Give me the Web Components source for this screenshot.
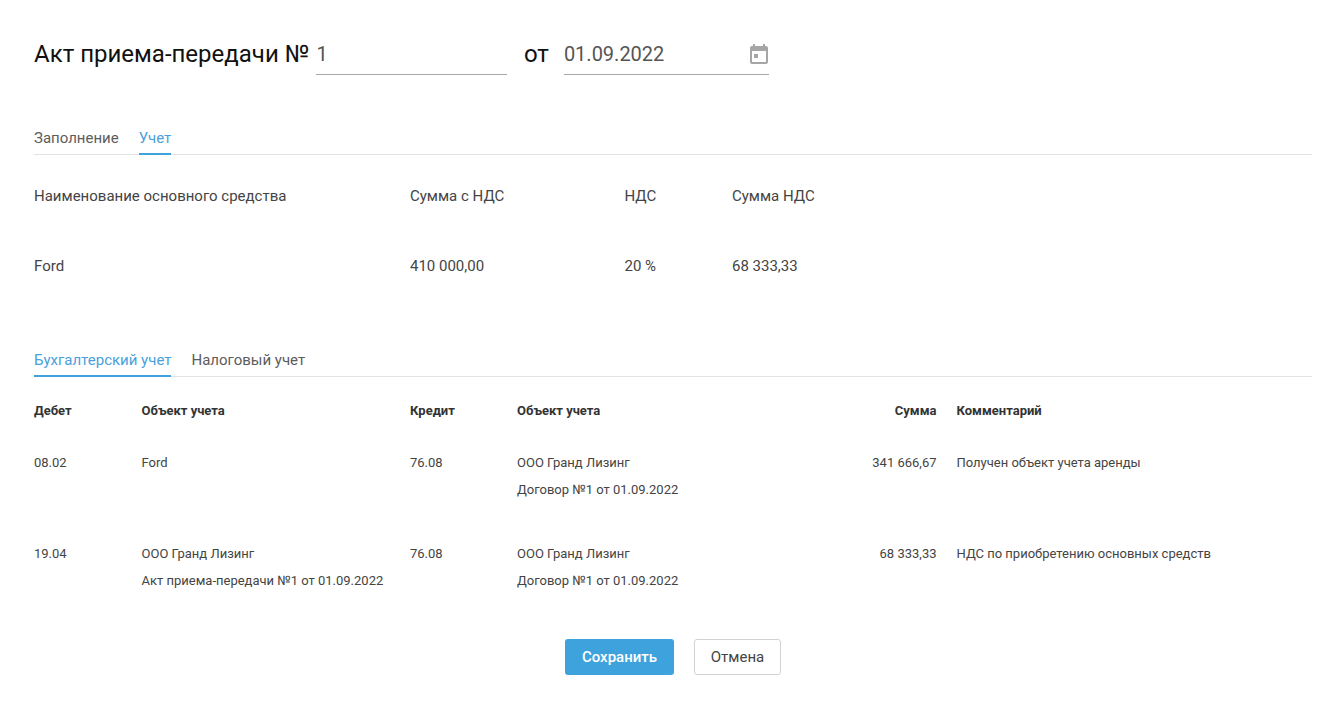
<!DOCTYPE html>
<html lang="ru">
<head>
<meta charset="utf-8">
<title>Акт приема-передачи</title>
<style>
  html, body { margin: 0; background: #fff; }
  body { font-family: Roboto, "Liberation Sans", sans-serif; color: #333; }
</style>
</head>
<body>
<act-page>
  <act-header slot="header" number="1" date="01.09.2022"></act-header>

  <tab-bar>
    <tab-item>Заполнение</tab-item>
    <tab-item active>Учет</tab-item>
  </tab-bar>

  <asset-table></asset-table>

  <tab-bar>
    <tab-item active>Бухгалтерский учет</tab-item>
    <tab-item>Налоговый учет</tab-item>
  </tab-bar>

  <entries-table></entries-table>

  <form-actions></form-actions>
</act-page>

<script>
class ActPage extends HTMLElement {
  constructor() {
    super();
    this.root = this.attachShadow({ mode: "open" });
    this.root.innerHTML = `
      <style>
        :host {
          display: block;
          box-sizing: border-box;
          height: 703px;
          padding: 0 6px 0 34px;
          overflow: hidden;
        }
      </style>
      <slot name="header"></slot>
      <slot></slot>
    `;
  }
}

class ActHeader extends HTMLElement {
  constructor() {
    super();
    this.root = this.attachShadow({ mode: "open" });
    this.root.innerHTML = `
      <style>
        :host {
          display: flex;
          align-items: flex-start;
          padding-top: 34px;
          height: 88px;
        }
        .title, .of {
          font-size: 24px;
          line-height: 40px;
          color: #111;
          white-space: nowrap;
        }
        .field {
          box-sizing: border-box;
          height: 41px;
          border-bottom: 1px solid #a8a8a8;
          font-size: 20px;
          line-height: 40px;
          color: #555;
          display: flex;
          justify-content: space-between;
          align-items: center;
        }
        .number { width: 191px; margin-left: 7px; }
        .of { margin: 0 15.5px 0 16.5px; }
        .date { width: 205px; }
        .value { margin-left: -0.5px; }
        svg { display: block; margin-right: -2px; }
      </style>
      <span class="title">Акт приема-передачи №</span>
      <div class="field number"></div>
      <span class="of">от</span>
      <div class="field date">
        <span class="value"></span>
        <svg width="24" height="24" viewBox="0 0 24 24" fill="#a6a6a6">
          <path d="M19 4h-1V2h-2v2H8V2H6v2H5C3.9 4 3 4.9 3 6v14c0 1.1.9 2 2 2h14c1.1 0 2-.9 2-2V6c0-1.1-.9-2-2-2zm0 16H5V9h14v11z"/>
          <path d="M7 12h4v4H7z"/>
        </svg>
      </div>
    `;
  }

  connectedCallback() {
    this.root.querySelector(".number").textContent = this.getAttribute("number");
    this.root.querySelector(".value").textContent = this.getAttribute("date");
  }
}

class TabBar extends HTMLElement {
  constructor() {
    super();
    this.root = this.attachShadow({ mode: "open" });
    this.root.innerHTML = `
      <style>
        :host {
          display: flex;
          gap: 20px;
          border-bottom: 1px solid #e3e3e3;
          height: 32px;
        }
      </style>
      <slot></slot>
    `;
  }
}

class TabItem extends HTMLElement {
  constructor() {
    super();
    this.root = this.attachShadow({ mode: "open" });
    this.root.innerHTML = `
      <style>
        :host {
          display: block;
          box-sizing: border-box;
          height: 33px;
          font-size: 15px;
          line-height: 32px;
          color: #5c5c5c;
          white-space: nowrap;
        }
        :host([active]) {
          color: #4a9fdc;
          border-bottom: 2px solid #3ea3dd;
        }
      </style>
      <slot></slot>
    `;
  }
}

class AssetTable extends HTMLElement {
  constructor() {
    super();
    this.root = this.attachShadow({ mode: "open" });
    this.root.innerHTML = `
      <style>
        :host {
          display: grid;
          grid-template-columns: 376px 214.5px 107.5px 1fr;
          grid-template-rows: 70px 70px;
          align-content: start;
          align-items: center;
          padding-top: 6px;
          height: 183px;
          font-size: 15px;
          color: #444;
        }
      </style>
      <div>Наименование основного средства</div>
      <div>Сумма с НДС</div>
      <div>НДС</div>
      <div>Сумма НДС</div>
      <div>Ford</div>
      <div>410 000,00</div>
      <div>20 %</div>
      <div>68 333,33</div>
    `;
  }
}

class EntriesTable extends HTMLElement {
  constructor() {
    super();
    this.root = this.attachShadow({ mode: "open" });
    this.root.innerHTML = `
      <style>
        :host {
          display: grid;
          grid-template-columns: 107.5px 268.5px 107px 1fr;
          font-size: 13px;
          color: #444;
          padding-top: 20px;
        }
        .cell { line-height: 27px; }
        .head { font-weight: 700; color: #333; padding-bottom: 25px; }
        .body { padding-bottom: 37px; }
        .pair { display: grid; grid-template-columns: 213px 226.5px 1fr; }
        .num { text-align: right; margin-right: 20px; }
      </style>
      <div class="cell head">Дебет</div>
      <div class="cell head">Объект учета</div>
      <div class="cell head">Кредит</div>
      <div class="cell head pair"><span>Объект учета</span><span class="num">Сумма</span><span>Комментарий</span></div>

      <div class="cell body">08.02</div>
      <div class="cell body">Ford</div>
      <div class="cell body">76.08</div>
      <div class="cell body pair">
        <span>ООО Гранд Лизинг<br>Договор №1 от 01.09.2022</span>
        <span class="num">341 666,67</span>
        <span>Получен объект учета аренды</span>
      </div>

      <div class="cell body">19.04</div>
      <div class="cell body">ООО Гранд Лизинг<br>Акт приема-передачи №1 от 01.09.2022</div>
      <div class="cell body">76.08</div>
      <div class="cell body pair">
        <span>ООО Гранд Лизинг<br>Договор №1 от 01.09.2022</span>
        <span class="num">68 333,33</span>
        <span>НДС по приобретению основных средств</span>
      </div>
    `;
  }
}

class FormActions extends HTMLElement {
  constructor() {
    super();
    this.root = this.attachShadow({ mode: "open" });
    this.root.innerHTML = `
      <style>
        :host {
          display: flex;
          gap: 20px;
          justify-content: center;
          margin-top: 8px;
        }
        button {
          box-sizing: border-box;
          height: 36px;
          font: 500 15px Roboto, sans-serif;
          border-radius: 3px;
          cursor: pointer;
        }
        .save { width: 109px; background: #3ea3dd; color: #fff; border: none; }
        .cancel { width: 87px; background: #fff; color: #444; font-weight: 400; border: 1px solid #d2d2d2; }
      </style>
      <button class="save">Сохранить</button>
      <button class="cancel">Отмена</button>
    `;
  }
}

customElements.define("act-page", ActPage);
customElements.define("act-header", ActHeader);
customElements.define("tab-bar", TabBar);
customElements.define("tab-item", TabItem);
customElements.define("asset-table", AssetTable);
customElements.define("entries-table", EntriesTable);
customElements.define("form-actions", FormActions);
</script>
</body>
</html>
